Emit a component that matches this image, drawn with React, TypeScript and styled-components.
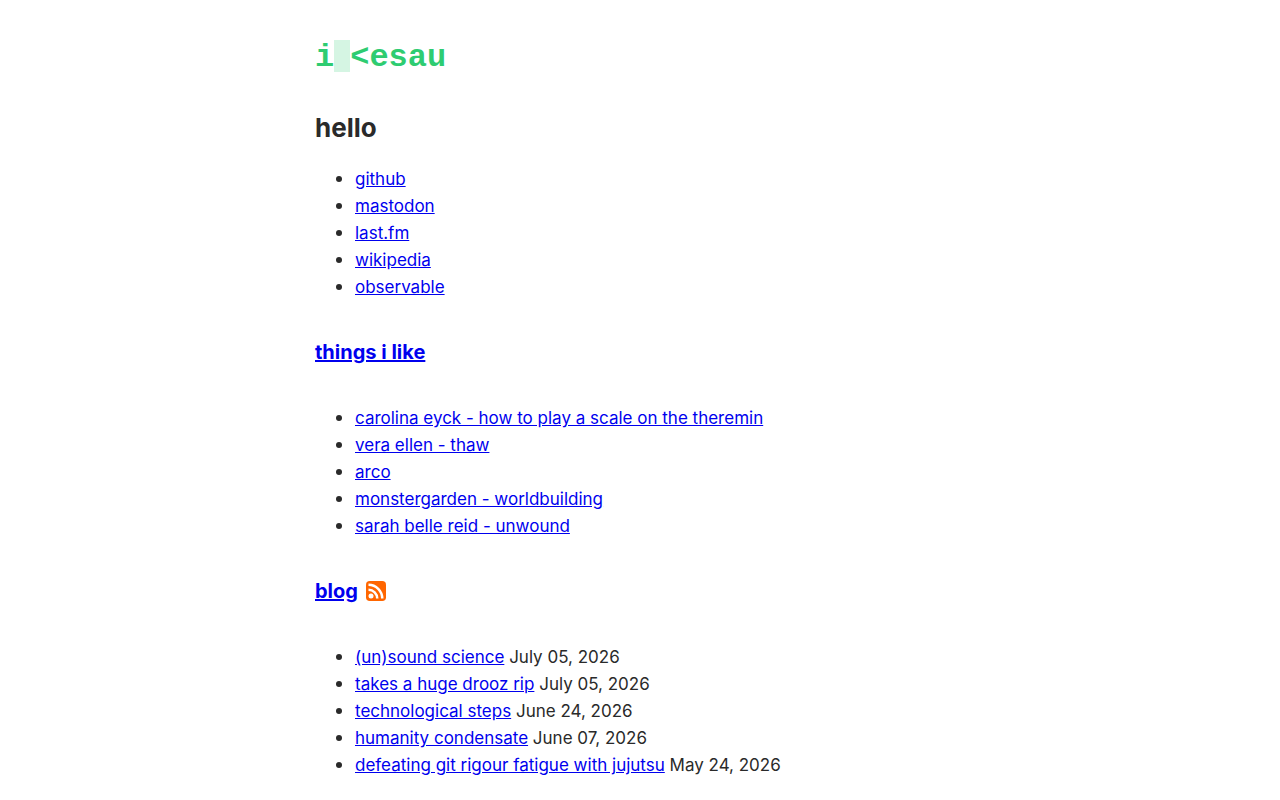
import React from "react";
import styled, { createGlobalStyle } from "styled-components";

const GlobalStyle = createGlobalStyle`
  body {
    margin: 0;
    background: #fff;
    color: #2a2a2a;
    font-family: Inter, "Liberation Sans", sans-serif;
    font-size: 17px;
    line-height: 26px;
  }
`;

const Page = styled.main`
  max-width: 650px;
  margin: 0 auto;
  padding: 40px 16px 16px;
`;

const Logo = styled.a`
  display: flex;
  width: fit-content;
  color: #2ecc71;
  font-family: "Courier New", "Liberation Mono", monospace;
  font-size: 32px;
  font-weight: 700;
  line-height: 36px;
  text-decoration: none;
`;

const Cursor = styled.span`
  width: 16px;
  height: 32px;
  background: #d5f5e3;
`;

const Title = styled.h1`
  margin: 31px 0 16px;
  font-size: 26px;
  line-height: 42px;
`;

const Heading = styled.h2`
  display: flex;
  align-items: center;
  gap: 8px;
  margin: 36px 0;
  font-size: 20px;
  line-height: 32px;
`;

const List = styled.ul`
  margin: 0;
  padding-left: 40px;

  li::marker {
    font-size: 20px;
  }
`;

const Link = styled.a`
  color: #0000ee;
  text-decoration: underline;
`;

const FeedLink = styled.a`
  display: flex;
`;

const profiles = ["github", "mastodon", "last.fm", "wikipedia", "observable"];

const likes = [
  "carolina eyck - how to play a scale on the theremin",
  "vera ellen - thaw",
  "arco",
  "monstergarden - worldbuilding",
  "sarah belle reid - unwound",
];

const posts = [
  { title: "(un)sound science", date: "July 05, 2026" },
  { title: "takes a huge drooz rip", date: "July 05, 2026" },
  { title: "technological steps", date: "June 24, 2026" },
  { title: "humanity condensate", date: "June 07, 2026" },
  { title: "defeating git rigour fatigue with jujutsu", date: "May 24, 2026" },
];

function RssIcon() {
  return (
    <svg width="20" height="20" viewBox="0 0 8 8" aria-hidden="true">
      <rect width="8" height="8" rx="1.5" fill="#ff6600" />
      <circle cx="2" cy="6" r="1" fill="#fff" />
      <path d="M1 4a3 3 0 0 1 3 3h1a4 4 0 0 0-4-4z" fill="#fff" />
      <path d="M1 2a5 5 0 0 1 5 5h1a6 6 0 0 0-6-6z" fill="#fff" />
    </svg>
  );
}

export default function App() {
  return (
    <>
      <GlobalStyle />
      <Page>
        <Logo href="#">
          <span>i</span>
          <Cursor />
          <span>&lt;esau</span>
        </Logo>
        <Title>hello</Title>
        <List>
          {profiles.map((name) => (
            <li key={name}>
              <Link href="#">{name}</Link>
            </li>
          ))}
        </List>
        <Heading>
          <Link href="#">things i like</Link>
        </Heading>
        <List>
          {likes.map((name) => (
            <li key={name}>
              <Link href="#">{name}</Link>
            </li>
          ))}
        </List>
        <Heading>
          <Link href="#">blog</Link>
          <FeedLink href="#" aria-label="RSS feed">
            <RssIcon />
          </FeedLink>
        </Heading>
        <List>
          {posts.map((post) => (
            <li key={post.title}>
              <Link href="#">{post.title}</Link> {post.date}
            </li>
          ))}
        </List>
      </Page>
    </>
  );
}
